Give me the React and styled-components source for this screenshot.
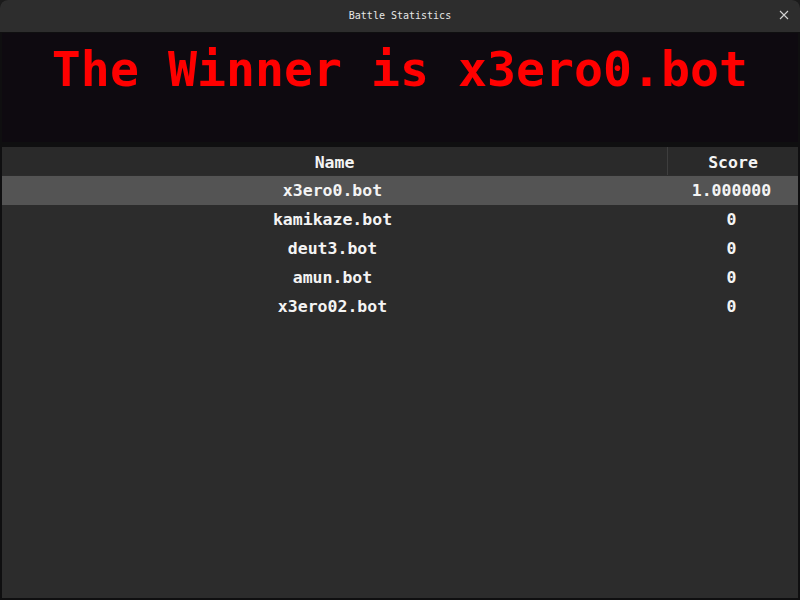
import { Fragment } from 'react'
import styled, { createGlobalStyle } from 'styled-components'

const GlobalStyle = createGlobalStyle`
  html, body {
    margin: 0;
    padding: 0;
    background: #1b1b1b;
  }
  * {
    box-sizing: border-box;
  }
`

const Window = styled.div`
  width: 800px;
  height: 600px;
  display: flex;
  flex-direction: column;
  background: #0f0f10;
  border-radius: 8px 8px 0 0;
  overflow: hidden;
  font-family: "DejaVu Sans Mono", "Liberation Mono", monospace;
`

const TitleBar = styled.div`
  height: 32px;
  flex: none;
  display: grid;
  grid-template-columns: 1fr auto 1fr;
  align-items: center;
  padding-bottom: 2px;
  background: #2d2d2d;
  color: #e6e6e6;
  font-size: 10px;
`

const Title = styled.div`
  grid-column: 2;
`

const Close = styled.div`
  grid-column: 3;
  justify-self: end;
  width: 32px;
  display: flex;
  justify-content: center;
`

const Body = styled.div`
  flex: 1;
  display: flex;
  flex-direction: column;
  gap: 5px;
  padding: 1px 2px 2px;
`

const Banner = styled.div`
  height: 109px;
  flex: none;
  background: #0e0a10;
  color: #ff0000;
  font-size: 48.2px;
  font-weight: bold;
  text-align: center;
  padding-top: 8px;
  white-space: nowrap;
`

const Table = styled.div`
  flex: 1;
  background: #2c2c2c;
  display: grid;
  grid-template-columns: 1fr 131px;
  grid-auto-rows: 29px;
  align-content: start;
  color: #f4f4f4;
  font-size: 16.5px;
  font-weight: bold;
`

const HeadCell = styled.div`
  height: 28px;
  display: flex;
  align-items: center;
  justify-content: center;
  padding-top: 2px;
  background: #2a2a2a;
  border-left: ${p => (p.$divider ? '1px solid #3e3e3e' : 'none')};
`

const Cell = styled.div`
  display: flex;
  align-items: center;
  justify-content: center;
  padding-right: ${p => (p.$score ? '2px' : '4px')};
  background: ${p => (p.$selected ? '#545454' : 'transparent')};
`

const rows = [
  { name: 'x3ero0.bot', score: '1.000000' },
  { name: 'kamikaze.bot', score: '0' },
  { name: 'deut3.bot', score: '0' },
  { name: 'amun.bot', score: '0' },
  { name: 'x3ero02.bot', score: '0' },
]

export default function App() {
  return (
    <>
      <GlobalStyle />
      <Window>
        <TitleBar>
          <Title>Battle Statistics</Title>
          <Close>
            <svg width="10" height="10" viewBox="0 0 10 10">
              <path d="M1 1 L9 9 M9 1 L1 9" stroke="#d0d0d0" strokeWidth="1.1" fill="none" />
            </svg>
          </Close>
        </TitleBar>
        <Body>
          <Banner>The Winner is x3ero0.bot</Banner>
          <Table>
            <HeadCell>Name</HeadCell>
            <HeadCell $divider>Score</HeadCell>
            {rows.map((r, i) => (
              <Fragment key={r.name}>
                <Cell $selected={i === 0}>{r.name}</Cell>
                <Cell $score $selected={i === 0}>{r.score}</Cell>
              </Fragment>
            ))}
          </Table>
        </Body>
      </Window>
    </>
  )
}
